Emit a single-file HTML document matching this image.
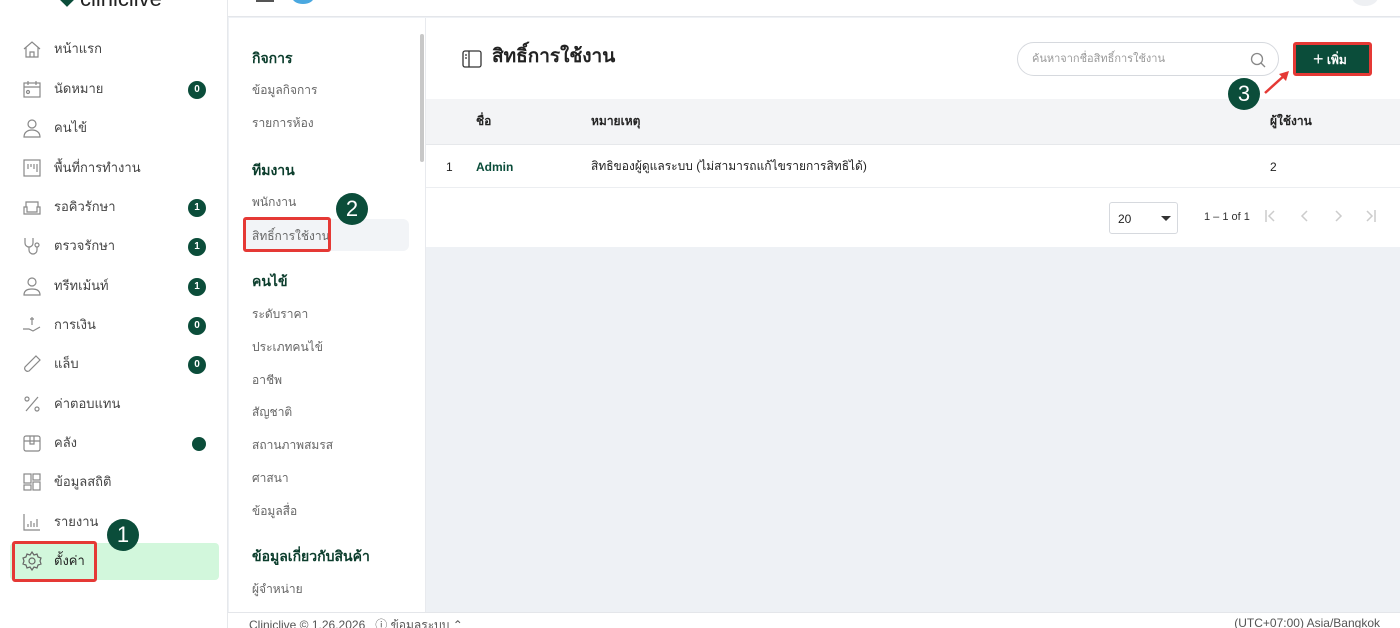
<!DOCTYPE html>
<html><head><meta charset="utf-8">
<style>
*{box-sizing:border-box;margin:0;padding:0}
html,body{width:1400px;height:628px;overflow:hidden}
body{position:relative;background:#eef1f5;font-family:"Liberation Sans","Noto Sans CJK SC",sans-serif;color:#222}
.abs{position:absolute}
#side{left:0;top:0;width:228px;height:628px;background:#fff;border-right:1px solid #e6e8eb}
.it{position:absolute;left:0;width:228px;height:20px;font-size:13px;color:#444;line-height:18px}
.it span.t{position:absolute;left:54px;top:0}
.it svg{position:absolute;left:22px;top:-1px}
.bd{position:absolute;left:188px;top:1px;width:18px;height:18px;border-radius:50%;background:#0b4d3a;color:#fff;font-size:10px;font-weight:bold;text-align:center;line-height:18px}
#top{left:228px;top:0;width:1172px;height:17px;background:#fff;border-bottom:1px solid #e4e6ea}
#sub{left:229px;top:18px;width:197px;height:594px;background:#fff;border-right:1px solid #e8eaee}
.h{position:absolute;left:23px;font-size:14px;font-weight:bold;color:#0b3d2c;line-height:16px}
.s{position:absolute;left:23px;font-size:12px;color:#666;line-height:14px}
#card{left:426px;top:18px;width:974px;height:229px;background:#fff}
.num{position:absolute;width:32px;height:32px;border-radius:50%;background:#0b4d3a;color:#fff;font-size:22px;text-align:center;line-height:32px}
.red{position:absolute;border:3px solid #e53935;border-radius:3px}
#foot{left:228px;top:612px;width:1172px;height:16px;background:#fff;border-top:1px solid #e4e6ea;font-size:12px;color:#555;overflow:hidden}
</style></head><body>
<div id="side" class="abs">
 <div class="abs" style="left:60px;top:-10px;width:14px;height:14px;background:#0b4d3a;transform:rotate(45deg)"></div>
 <div class="abs" style="left:80px;top:-14px;font-size:22px;color:#222">cliniclive</div>
 <div class="abs" style="left:10px;top:543px;width:209px;height:37px;background:#d2f7dc;border-radius:4px"></div>
 <div class="it" style="top:40px"><svg width="20" height="20" fill="none" stroke="#888" stroke-width="1.2"><path d="M2 10L10 3l8 7M4 8v10h12V8M8 18v-5h4v5"/></svg><span class="t">หน้าแรก</span></div>
 <div class="it" style="top:80px"><svg width="20" height="20" fill="none" stroke="#888" stroke-width="1.2"><rect x="2" y="4" width="16" height="14"/><path d="M2 8h16M6 2v4M14 2v4"/><circle cx="6" cy="13" r="1.5"/></svg><span class="t">นัดหมาย</span><div class="bd">0</div></div>
 <div class="it" style="top:119px"><svg width="20" height="20" fill="none" stroke="#888" stroke-width="1.2"><circle cx="10" cy="6" r="4"/><path d="M2 19c0-5 4-7 8-7s8 2 8 7z"/></svg><span class="t">คนไข้</span></div>
 <div class="it" style="top:159px"><svg width="20" height="20" fill="none" stroke="#888" stroke-width="1.2"><rect x="2" y="2" width="16" height="16"/><path d="M6 6v5M9 6v3M12 6v5M15 6v8"/></svg><span class="t">พื้นที่การทำงาน</span></div>
 <div class="it" style="top:198px"><svg width="20" height="20" fill="none" stroke="#888" stroke-width="1.2"><path d="M4 10V5h12v5M2 10h3v5h10v-5h3v7H2z"/></svg><span class="t">รอคิวรักษา</span><div class="bd">1</div></div>
 <div class="it" style="top:237px"><svg width="20" height="20" fill="none" stroke="#888" stroke-width="1.2"><path d="M3 2v5a4 4 0 008 0V2M7 11v3a4 4 0 008 0v-3"/><circle cx="15" cy="9" r="2"/></svg><span class="t">ตรวจรักษา</span><div class="bd">1</div></div>
 <div class="it" style="top:277px"><svg width="20" height="20" fill="none" stroke="#888" stroke-width="1.2"><circle cx="10" cy="6" r="4"/><path d="M2 19c0-5 4-6 8-6s8 1 8 6z"/></svg><span class="t">ทรีทเม้นท์</span><div class="bd">1</div></div>
 <div class="it" style="top:316px"><svg width="20" height="20" fill="none" stroke="#888" stroke-width="1.2"><path d="M1 14h6l4 2 7-4M10 2v8M8 4h4"/></svg><span class="t">การเงิน</span><div class="bd">0</div></div>
 <div class="it" style="top:355px"><svg width="20" height="20" fill="none" stroke="#888" stroke-width="1.2"><path d="M14 2l4 4L7 17a3 3 0 01-4-4z"/></svg><span class="t">แล็บ</span><div class="bd">0</div></div>
 <div class="it" style="top:395px"><svg width="20" height="20" fill="none" stroke="#888" stroke-width="1.2"><path d="M16 3L4 17"/><circle cx="5" cy="5" r="2"/><circle cx="15" cy="15" r="2"/></svg><span class="t">ค่าตอบแทน</span></div>
 <div class="it" style="top:434px"><svg width="20" height="20" fill="none" stroke="#888" stroke-width="1.2"><rect x="2" y="3" width="16" height="15" rx="2"/><path d="M2 8h16M8 3v8h4V3"/></svg><span class="t">คลัง</span><div class="bd" style="left:192px;top:3px;width:14px;height:14px"></div></div>
 <div class="it" style="top:473px"><svg width="20" height="20" fill="none" stroke="#888" stroke-width="1.2"><rect x="2" y="2" width="7" height="9"/><rect x="11" y="2" width="7" height="6"/><rect x="2" y="13" width="7" height="5"/><rect x="11" y="10" width="7" height="8"/></svg><span class="t">ข้อมูลสถิติ</span></div>
 <div class="it" style="top:513px"><svg width="20" height="20" fill="none" stroke="#888" stroke-width="1.2"><path d="M2 2v16h16M6 15v-3M9 15v-6M12 15v-4M15 15V7"/></svg><span class="t">รายงาน</span></div>
 <div class="it" style="top:552px"><svg width="20" height="20" fill="none" stroke="#666" stroke-width="1.2"><circle cx="10" cy="10" r="3"/><path d="M10 1l2 3 3-1 1 3 3 1-1 3 1 3-3 1-1 3-3-1-2 3-2-3-3 1-1-3-3-1 1-3-1-3 3-1 1-3 3 1z"/></svg><span class="t" style="color:#222">ตั้งค่า</span></div>
 <div class="red" style="left:12px;top:541px;width:85px;height:41px"></div>
</div>
<div id="top" class="abs">
 <div class="abs" style="left:28px;top:0;width:18px;height:2px;background:#555"></div>
 <div class="abs" style="left:64px;top:-10px;width:22px;height:14px;border-radius:50%;background:#4aa8e0"></div>
 <div class="abs" style="left:1124px;top:-12px;width:26px;height:18px;border-radius:50%;background:#eef0f3"></div>
</div>
<div id="sub" class="abs">
 <div class="abs" style="left:191px;top:16px;width:4px;height:128px;background:#c8c8c8;border-radius:2px"></div>
 <div class="h" style="top:32px">กิจการ</div>
 <div class="s" style="top:65px">ข้อมูลกิจการ</div>
 <div class="s" style="top:98px">รายการห้อง</div>
 <div class="h" style="top:144px">ทีมงาน</div>
 <div class="s" style="top:177px">พนักงาน</div>
 <div class="abs" style="left:14px;top:201px;width:166px;height:32px;background:#f2f4f7;border-radius:6px"></div>
 <div class="s" style="top:211px">สิทธิ์การใช้งาน</div>
 <div class="red" style="left:14px;top:199px;width:88px;height:35px"></div>
 <div class="h" style="top:255px">คนไข้</div>
 <div class="s" style="top:289px">ระดับราคา</div>
 <div class="s" style="top:322px">ประเภทคนไข้</div>
 <div class="s" style="top:355px">อาชีพ</div>
 <div class="s" style="top:387px">สัญชาติ</div>
 <div class="s" style="top:420px">สถานภาพสมรส</div>
 <div class="s" style="top:453px">ศาสนา</div>
 <div class="s" style="top:486px">ข้อมูลสื่อ</div>
 <div class="h" style="top:530px">ข้อมูลเกี่ยวกับสินค้า</div>
 <div class="s" style="top:564px">ผู้จำหน่าย</div>
</div>
<div id="card" class="abs">
 <svg class="abs" style="left:36px;top:32px" width="20" height="18" fill="none" stroke="#333" stroke-width="1.3"><rect x="1" y="1" width="18" height="16" rx="2"/><path d="M7 1v16M3 5h2M3 8h2"/></svg>
 <div class="abs" style="left:66px;top:28px;font-size:19px;font-weight:bold;color:#222;line-height:22px">สิทธิ์การใช้งาน</div>
 <div class="abs" style="left:591px;top:24px;width:262px;height:34px;border:1px solid #d6d9de;border-radius:17px;font-size:11px;color:#999;padding:9px 0 0 14px;line-height:14px">ค้นหาจากชื่อสิทธิ์การใช้งาน
  <svg class="abs" style="left:232px;top:9px" width="16" height="16" fill="none" stroke="#888" stroke-width="1.3"><circle cx="7" cy="7" r="5.5"/><path d="M11 11l4 4"/></svg></div>
 <div class="abs" style="left:867px;top:24px;width:79px;height:34px;background:#0b4d3a;border:3px solid #e53935;border-radius:3px;color:#fff;font-size:12px;font-weight:bold;line-height:28px;padding-left:17px"><span style="font-size:18px;font-weight:normal;vertical-align:-1px">+</span> เพิ่ม</div>
 <svg class="abs" style="left:836px;top:52px" width="30" height="26"><path d="M3 23L24 4" stroke="#e53935" stroke-width="2.5"/><path d="M27 1l-10 3 7 7z" fill="#e53935"/></svg>
 <div class="abs" style="left:0;top:81px;width:974px;height:46px;background:#f3f4f6;border-bottom:1px solid #e6e8eb;font-size:12px;font-weight:bold;line-height:14px">
  <span class="abs" style="left:50px;top:15px">ชื่อ</span><span class="abs" style="left:165px;top:15px">หมายเหตุ</span><span class="abs" style="left:844px;top:15px">ผู้ใช้งาน</span></div>
 <div class="abs" style="left:0;top:128px;width:974px;height:42px;border-bottom:1px solid #eceef1;font-size:12px;line-height:14px">
  <span class="abs" style="left:20px;top:14px">1</span><span class="abs" style="left:50px;top:14px;color:#0b4d3a;font-weight:bold">Admin</span><span class="abs" style="left:165px;top:13px">สิทธิของผู้ดูแลระบบ (ไม่สามารถแก้ไขรายการสิทธิได้)</span><span class="abs" style="left:844px;top:14px">2</span></div>
 <div class="abs" style="left:683px;top:184px;width:69px;height:32px;border:1px solid #d6d9de;border-radius:3px;font-size:12px;padding:9px 0 0 8px;line-height:14px">20<span class="abs" style="left:51px;top:13px;border:5px solid transparent;border-top:5px solid #333"></span></div>
 <div class="abs" style="left:778px;top:193px;font-size:11px;color:#333">1 – 1 of 1</div>
 <svg class="abs" style="left:838px;top:191px" width="120" height="14" fill="none" stroke="#ccc" stroke-width="1.5"><path d="M2 1v12M10 2L5 7l5 5M43 2l-5 5 5 5M72 2l5 5-5 5M103 2l5 5-5 5M111 1v12"/></svg>
</div>
<div id="foot" class="abs"><span class="abs" style="left:21px;top:3px">Cliniclive © 1.26.2026 &nbsp; ⓘ ข้อมูลระบบ ⌃</span><span class="abs" style="right:20px;top:3px">(UTC+07:00) Asia/Bangkok</span></div>
<div class="num" style="left:107px;top:519px">1</div>
<div class="num" style="left:336px;top:193px">2</div>
<div class="num" style="left:1228px;top:78px">3</div>
</body></html>
